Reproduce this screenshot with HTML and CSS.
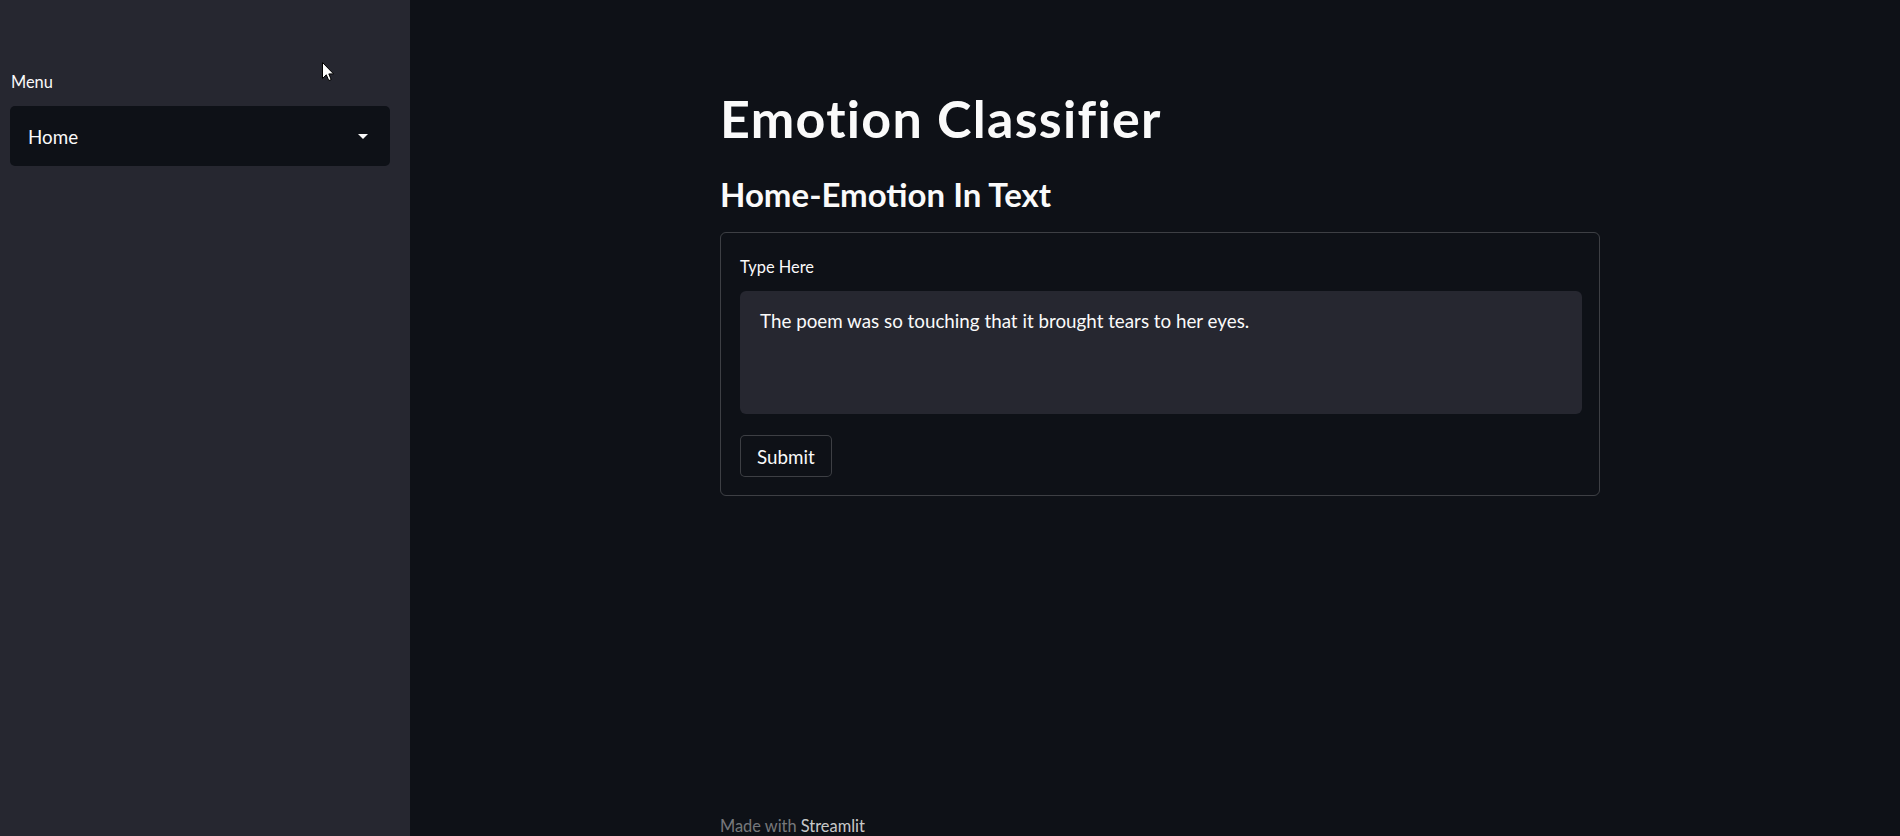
FILE: index.html
```html
<!DOCTYPE html>
<html>
<head>
<meta charset="utf-8">
<link rel="stylesheet" href="styles.css">
</head>
<body>
<div class="app">
  <aside class="sidebar">
    <div class="field-label menu-label">Menu</div>
    <div class="select">
      <span>Home</span>
      <svg class="caret" width="10" height="5" viewBox="0 0 10 5"><path d="M0 0h10L5 5z" fill="#fafafa"/></svg>
    </div>
  </aside>
  <main class="main">
    <div class="content">
      <h1 class="title">Emotion Classifier</h1>
      <h3 class="subtitle">Home-Emotion In Text</h3>
      <form class="form">
        <div class="field-label">Type Here</div>
        <div class="textarea">The poem was so touching that it brought tears to her eyes.</div>
        <button type="button" class="btn">Submit</button>
      </form>
    </div>
    <footer class="footer">Made with <span class="brand">Streamlit</span></footer>
  </main>
</div>
<svg class="cursor" width="13" height="20" viewBox="0 0 13 20"><path d="M0.5 0.5V16.5L4.3 12.8L6.8 18.6L9.2 17.6L6.8 11.9H11.6Z" fill="#fff" stroke="#000" stroke-width="1" stroke-linejoin="round"/></svg>
</body>
</html>
```
FILE: styles.css
```css
* { box-sizing: border-box; }
html, body { margin: 0; padding: 0; height: 100%; }
body { background: #0e1117; color: #fafafa; font-family: Lato, "Open Sans", sans-serif; overflow: hidden; }
.app { display: flex; height: 836px; }
.sidebar { width: 410px; flex: none; background: #262730; padding: 72px 20px 0 10px; }
.field-label { font-size: 16.4px; line-height: 20px; margin-bottom: 14px; }
.menu-label { padding-left: 1px; }
.select { height: 60px; border-radius: 5px; background: #0e1117; display: flex; align-items: center; justify-content: space-between; padding: 0 22px 0 18px; font-size: 18.8px; }
.caret { display: block; margin-top: 1px; }
.main { flex: 1; display: flex; flex-direction: column; padding: 0 300px 0 310px; }
.content { width: 880px; flex: 1; padding-top: 87px; }
.title { margin: 0; font-size: 52px; font-weight: 700; line-height: 62px; letter-spacing: 1.3px; }
.subtitle { margin: 25px 0 0; font-size: 33px; font-weight: 700; line-height: 40px; }
.form { margin-top: 18px; border: 1px solid rgba(250,250,250,0.2); border-radius: 6px; padding: 24px 17px 18px 19px; }
.textarea { height: 123px; background: #262730; border-radius: 6px; padding: 16.5px 20px; font-size: 18.8px; line-height: 1.4; }
.btn { display: block; margin-top: 21px; height: 42px; padding: 0 16px; background: #0e1117; color: #fafafa; border: 1px solid rgba(250,250,250,0.2); border-radius: 5px; font-family: inherit; font-size: 18.8px; }
.footer { height: 20px; line-height: 20px; font-size: 16.4px; color: rgba(250,250,250,0.45); }
.footer .brand { color: rgba(250,250,250,0.8); }
.cursor { position: absolute; left: 322px; top: 62px; }
```
